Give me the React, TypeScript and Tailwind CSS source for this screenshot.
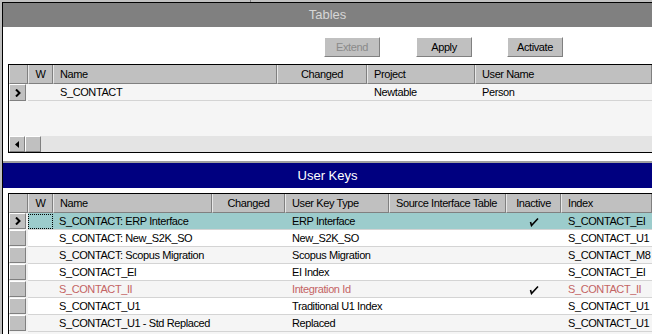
const raised =
  'bg-[#c0c0c0] border border-t-white border-l-white border-b-[#808080] border-r-[#808080]';

type Col = { label: string; w: number | null; align?: 'center' };

const tableCols: Col[] = [
  { label: '', w: 19 },
  { label: 'W', w: 25, align: 'center' },
  { label: 'Name', w: 224 },
  { label: 'Changed', w: 90, align: 'center' },
  { label: 'Project', w: 108 },
  { label: 'User Name', w: null },
];

const keyCols: Col[] = [
  { label: '', w: 19 },
  { label: 'W', w: 25, align: 'center' },
  { label: 'Name', w: 159 },
  { label: 'Changed', w: 73, align: 'center' },
  { label: 'User Key Type', w: 104 },
  { label: 'Source Interface Table', w: 117 },
  { label: 'Inactive', w: 55, align: 'center' },
  { label: 'Index', w: null },
];

type KeyRow = {
  name: string;
  type: string;
  inactive?: boolean;
  index: string;
  red?: boolean;
};

const keyRows: KeyRow[] = [
  { name: 'S_CONTACT: ERP Interface', type: 'ERP Interface', inactive: true, index: 'S_CONTACT_EI' },
  { name: 'S_CONTACT: New_S2K_SO', type: 'New_S2K_SO', index: 'S_CONTACT_U1' },
  { name: 'S_CONTACT: Scopus Migration', type: 'Scopus Migration', index: 'S_CONTACT_M8' },
  { name: 'S_CONTACT_EI', type: 'EI Index', index: 'S_CONTACT_EI' },
  { name: 'S_CONTACT_II', type: 'Integration Id', inactive: true, index: 'S_CONTACT_II', red: true },
  { name: 'S_CONTACT_U1', type: 'Traditional U1 Index', index: 'S_CONTACT_U1' },
  { name: 'S_CONTACT_U1 - Std Replaced', type: 'Replaced', index: 'S_CONTACT_U1' },
];

function Header({ cols }: { cols: Col[] }) {
  return (
    <div className="flex h-[19px] shrink-0 bg-[#c0c0c0]">
      {cols.map((c, i) => (
        <div
          key={i}
          style={c.w ? { width: c.w } : undefined}
          className={`flex h-full shrink-0 items-center overflow-hidden whitespace-nowrap border-l border-r border-b border-l-[#e8e8e8] border-r-[#808080] border-b-[#808080] ${
            c.w ? '' : 'flex-1'
          } ${c.align === 'center' ? 'justify-center' : 'pl-[6px]'}`}
        >
          {c.label}
        </div>
      ))}
    </div>
  );
}

function Chevron() {
  return (
    <svg width="6" height="8" viewBox="0 0 6 8">
      <path d="M1 0.5 L4.5 4 L1 7.5" stroke="black" strokeWidth="2" fill="none" />
    </svg>
  );
}

function Check() {
  return (
    <svg width="10" height="10" viewBox="0 0 10 10">
      <path d="M1.5 5 L2.5 8.5 L9 1.5" stroke="black" strokeWidth="1.6" fill="none" />
    </svg>
  );
}

function Cell({
  w,
  children,
  align,
}: {
  w: number | null;
  children?: React.ReactNode;
  align?: 'center';
}) {
  return (
    <div
      style={w ? { width: w } : undefined}
      className={`flex h-full shrink-0 items-center overflow-hidden whitespace-nowrap ${
        w ? '' : 'flex-1'
      } ${align === 'center' ? 'justify-center' : 'pl-[7px]'}`}
    >
      {children}
    </div>
  );
}

function Button({ label, disabled }: { label: string; disabled?: boolean }) {
  return (
    <button
      className={`h-[20px] w-[56px] ${raised} border-b-[#6a6a6a] border-r-[#6a6a6a] ${
        disabled ? 'text-[#8a8a8a]' : 'text-black'
      }`}
    >
      {label}
    </button>
  );
}

export default function App() {
  return (
    <div className="relative h-[334px] w-[652px] overflow-hidden bg-[#c0c0c0] pl-[2px] pt-[2px] font-['Liberation_Sans',Arial,sans-serif] text-[11px] tracking-[-0.4px] text-black">
      <div className="absolute left-[250px] top-0 h-[2px] w-px bg-[#808080]" />
      <div className="flex h-full flex-col border-l border-t border-black bg-white">
        {/* Tables */}
        <div className="flex h-[24px] shrink-0 items-center justify-center bg-[#808080] text-[13px] tracking-normal text-[#d6d6d6]">
          Tables
        </div>
        <div className="flex h-[37px] shrink-0 items-start pl-[321px] pt-[10px]">
          <Button label="Extend" disabled />
          <div className="w-[36px]" />
          <Button label="Apply" />
          <div className="w-[35px]" />
          <Button label="Activate" />
        </div>
        <div className="ml-[5px] flex h-[89px] shrink-0 flex-col border-b border-l border-t border-black bg-[#f5f5f5]">
          <Header cols={tableCols} />
          <div className="flex h-[17px] shrink-0">
            <div className="flex w-[19px] shrink-0 items-stretch pr-[2px]">
              <div className={`flex w-full items-center justify-center ${raised}`}>
                <Chevron />
              </div>
            </div>
            <div className="flex flex-1 border-b border-[#d4d4d4]">
              <Cell w={25} />
              <Cell w={224}>S_CONTACT</Cell>
              <Cell w={90} />
              <Cell w={108}>Newtable</Cell>
              <Cell w={null}>Person</Cell>
            </div>
          </div>
          <div className="flex-1" />
          <div className="flex h-[16px] shrink-0 bg-[#e4e4e4]">
            <div className={`flex w-[16px] items-center justify-center ${raised}`}>
              <svg width="4" height="7" viewBox="0 0 4 7">
                <path d="M4 0 L0 3.5 L4 7 Z" fill="black" />
              </svg>
            </div>
            <div className={`w-[16px] ${raised}`} />
          </div>
        </div>

        <div className="h-[8px] shrink-0" />

        {/* User Keys */}
        <div className="flex flex-1 flex-col border-t-2 border-[#a0a0a0]">
          <div className="flex h-[25px] shrink-0 items-center justify-center bg-[#000080] text-[13px] tracking-normal text-white">
            User Keys
          </div>
          <div className="h-[5px] shrink-0" />
          <div className="ml-[5px] flex flex-1 flex-col border-l border-t border-black">
            <Header cols={keyCols} />
            {keyRows.map((r, i) => {
              const bg =
                i === 0 ? 'bg-[#9ccccc]' : i % 2 === 0 ? 'bg-[#f5f5f5]' : 'bg-white';
              return (
                <div key={i} className={`flex h-[17px] shrink-0 ${r.red ? 'text-[#c46464]' : ''}`}>
                  <div className="flex w-[19px] shrink-0 bg-[#f0f0f0] pb-px pr-[2px]">
                    <div className={`flex w-full items-center justify-center ${raised}`}>
                      {i === 0 && <Chevron />}
                    </div>
                  </div>
                  <div className={`flex flex-1 border-b border-[#d4d4d4] pt-px ${bg}`}>
                    <div
                      className={`h-full w-[25px] shrink-0 ${
                        i === 0 ? 'border border-dotted border-black' : ''
                      }`}
                    />
                    <Cell w={159}>
                      <span className="-ml-px">{r.name}</span>
                    </Cell>
                    <Cell w={73} />
                    <Cell w={104}>{r.type}</Cell>
                    <Cell w={117} />
                    <Cell w={55} align="center">
                      {r.inactive && <Check />}
                    </Cell>
                    <Cell w={null}>{r.index}</Cell>
                  </div>
                </div>
              );
            })}
            <div className="flex-1 bg-[#f5f5f5]" />
          </div>
        </div>
      </div>
    </div>
  );
}
